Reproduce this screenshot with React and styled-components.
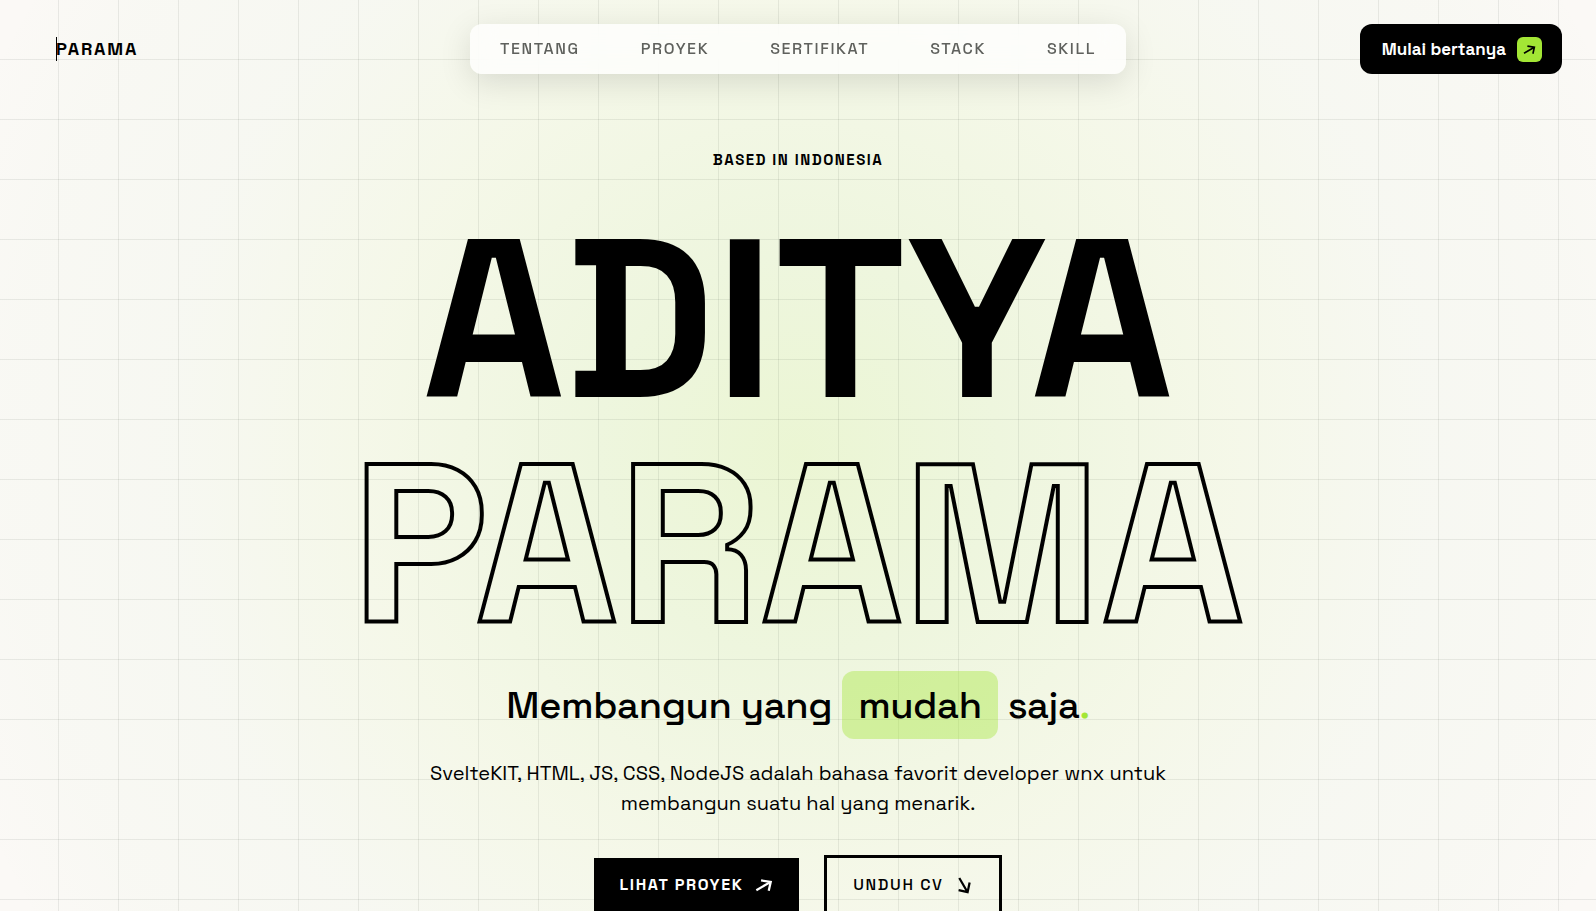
import React, { Component } from 'react';
import styled, { createGlobalStyle, ThemeProvider } from 'styled-components';

const theme = {
  black: '#000',
  grey: '#5f615d',
  paper: '#fbf9f6',
  lime: '#a3e635',
  font: "'Space Grotesk', Inter, 'Liberation Sans', sans-serif",
};

const links = [
  { href: '#tentang', label: 'Tentang' },
  { href: '#proyek', label: 'Proyek' },
  { href: '#sertifikat', label: 'Sertifikat' },
  { href: '#stack', label: 'Stack' },
  { href: '#skill', label: 'Skill' },
];

const GlobalStyle = createGlobalStyle`
  *, *:before, *:after {
    box-sizing: border-box;
  }
  html {
    scrollbar-width: none;
  }
  body {
    margin: 0;
    font-family: ${props => props.theme.font};
    color: ${props => props.theme.black};
    background: ${props => props.theme.paper};
  }
  a {
    color: inherit;
    text-decoration: none;
  }
`;

const Page = styled.div`
  min-height: 100vh;
  background-image: linear-gradient(to right, rgba(20, 30, 20, 0.08) 1px, transparent 1px),
    linear-gradient(to bottom, rgba(20, 30, 20, 0.08) 1px, transparent 1px),
    radial-gradient(
      circle 900px at 50% 50vh,
      rgba(163, 230, 53, 0.18),
      rgba(150, 225, 60, 0.13) 22%,
      rgba(163, 230, 53, 0.07) 48%,
      rgba(120, 210, 110, 0.03) 70%,
      rgba(120, 210, 110, 0.02) 88%,
      transparent
    );
  background-size: 60px 60px, 60px 60px, 100% 100%;
  background-position: -2px -1px, -2px -1px, 0 0;
`;

const Header = styled.header`
  display: grid;
  grid-template-columns: 1fr auto 1fr;
  align-items: center;
  padding: 24px 34px;
`;

const Logo = styled.a`
  justify-self: start;
  margin-left: 22px;
  box-shadow: inset 1px 0 ${props => props.theme.black};
  font-size: 18px;
  font-weight: 600;
  line-height: 24px;
  letter-spacing: 0.1em;
`;

const Nav = styled.nav`
  display: flex;
  align-items: center;
  gap: 61px;
  height: 50px;
  padding: 0 30px;
  border-radius: 12px;
  background: rgba(255, 255, 255, 0.75);
  backdrop-filter: blur(12px);
  box-shadow: 0 8px 32px rgba(0, 0, 0, 0.12);
`;

const NavLink = styled.a`
  font-size: 16px;
  font-weight: 500;
  line-height: 24px;
  letter-spacing: 0.1em;
  text-transform: uppercase;
  color: ${props => props.theme.grey};
`;

const AskButton = styled.button`
  justify-self: end;
  display: flex;
  align-items: center;
  gap: 11px;
  height: 50px;
  padding: 0 20px 0 22px;
  border: 0;
  border-radius: 12px;
  background: ${props => props.theme.black};
  color: white;
  font-family: inherit;
  font-size: 17px;
  font-weight: 700;
  cursor: pointer;
`;

const Badge = styled.span`
  display: flex;
  align-items: center;
  justify-content: center;
  width: 25px;
  height: 25px;
  border-radius: 6px;
  background: ${props => props.theme.lime};
  color: ${props => props.theme.black};
`;

const Hero = styled.main`
  display: flex;
  flex-direction: column;
  align-items: center;
  padding: 50px 24px 60px;
  text-align: center;
`;

const Eyebrow = styled.p`
  margin: 0;
  font-size: 15px;
  font-weight: 600;
  line-height: 24px;
  letter-spacing: 0.1em;
  text-transform: uppercase;
`;

const Title = styled.h1`
  margin: 35px 0 0;
  font-size: 225px;
  font-weight: 700;
  line-height: 225px;
  text-transform: uppercase;
`;

const TitleLine = styled.span`
  display: block;
  ${props =>
    props.$outline &&
    `
    color: transparent;
    -webkit-text-stroke: 4px ${props.theme.black};
  `}
`;

const Tagline = styled.h2`
  display: flex;
  align-items: center;
  gap: 10px;
  margin: 14px 0 0;
  font-size: 38px;
  font-weight: 500;
  line-height: 68px;
  letter-spacing: -0.01em;
`;

const Highlight = styled.span`
  padding: 0 16px;
  border-radius: 12px;
  background: rgba(163, 230, 53, 0.4);
`;

const Dot = styled.span`
  color: ${props => props.theme.lime};
`;

const Lead = styled.p`
  max-width: 768px;
  margin: 19px 0 0;
  font-size: 20px;
  line-height: 30px;
`;

const Actions = styled.div`
  display: flex;
  align-items: center;
  gap: 25px;
  margin-top: 37px;
`;

const Action = styled.a`
  display: flex;
  align-items: center;
  gap: 12px;
  padding: 15px 26px;
  font-size: 16px;
  font-weight: 700;
  line-height: 24px;
  letter-spacing: 0.1em;
  text-transform: uppercase;
  color: white;
  background: ${props => props.theme.black};
`;

const OutlineAction = styled(Action)`
  border: 3px solid ${props => props.theme.black};
  font-weight: 500;
  color: ${props => props.theme.black};
  background: transparent;
`;

const ArrowUp = ({ size }) => (
  <svg width={size} height={size} viewBox="0 0 16 16" fill="none" stroke="currentColor" strokeWidth="2" aria-hidden="true">
    <path d="M1.2 12.6 14 5.2M5.4 3.9 14 5.2 12.2 13.2" />
  </svg>
);

const ArrowDown = ({ size }) => (
  <svg width={size} height={size} viewBox="0 0 16 16" fill="none" stroke="currentColor" strokeWidth="2" aria-hidden="true">
    <path d="M3.8 1.8 11.2 14.4M3.2 12.6 11.2 14.4 13 5.8" />
  </svg>
);

export class Landing extends Component {
  render() {
    return (
      <Page>
        <Header>
          <Logo href="#">PARAMA</Logo>
          <Nav>
            {links.map(link => (
              <NavLink key={link.href} href={link.href}>
                {link.label}
              </NavLink>
            ))}
          </Nav>
          <AskButton type="button">
            Mulai bertanya
            <Badge>
              <ArrowUp size={13} />
            </Badge>
          </AskButton>
        </Header>
        <Hero>
          <Eyebrow>Based in Indonesia</Eyebrow>
          <Title>
            <TitleLine>Aditya</TitleLine>
            <TitleLine $outline>Parama</TitleLine>
          </Title>
          <Tagline>
            <span>Membangun yang</span>
            <Highlight>mudah</Highlight>
            <span>
              saja<Dot>.</Dot>
            </span>
          </Tagline>
          <Lead>
            SvelteKIT, HTML, JS, CSS, NodeJS adalah bahasa favorit developer wnx untuk membangun suatu hal yang
            menarik.
          </Lead>
          <Actions>
            <Action href="#proyek">
              Lihat Proyek
              <ArrowUp size={18} />
            </Action>
            <OutlineAction href="#cv">
              Unduh CV
              <ArrowDown size={18} />
            </OutlineAction>
          </Actions>
        </Hero>
      </Page>
    );
  }
}

const App = () => (
  <ThemeProvider theme={theme}>
    <GlobalStyle />
    <Landing />
  </ThemeProvider>
);

export default App;
